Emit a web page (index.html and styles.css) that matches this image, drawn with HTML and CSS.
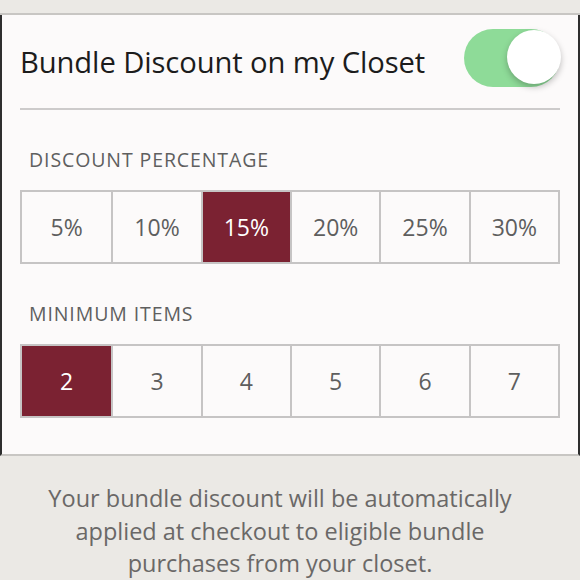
FILE: index.html
```html
<!DOCTYPE html>
<html lang="en">
<head>
    <meta charset="UTF-8">
    <meta name="viewport" content="width=device-width, initial-scale=1.0">
    <title>Bundle Discount</title>
    <link rel="stylesheet" href="styles.css">
</head>
<body>
    <div class="top-band"></div>

    <div class="card">
        <div class="setting-row">
            <span class="setting-title">Bundle Discount on my Closet</span>
            <div class="switch on">
                <div class="knob"></div>
            </div>
        </div>

        <div class="section">
            <div class="section-label">DISCOUNT PERCENTAGE</div>
            <div class="options">
                <div class="option">5%</div>
                <div class="option">10%</div>
                <div class="option selected">15%</div>
                <div class="option">20%</div>
                <div class="option">25%</div>
                <div class="option">30%</div>
            </div>
        </div>

        <div class="section">
            <div class="section-label">MINIMUM ITEMS</div>
            <div class="options">
                <div class="option selected">2</div>
                <div class="option">3</div>
                <div class="option">4</div>
                <div class="option">5</div>
                <div class="option">6</div>
                <div class="option">7</div>
            </div>
        </div>
    </div>

    <p class="note">Your bundle discount will be automatically applied at checkout to eligible bundle purchases from your closet.</p>
</body>
</html>
```

FILE: styles.css
```css
* {
    margin: 0;
    padding: 0;
    box-sizing: border-box;
    font-family: 'Open Sans', Lato, sans-serif;
}

body {
    background: #ebe9e5;
    width: 580px;
    height: 580px;
    overflow: hidden;
}

.top-band {
    height: 15px;
    border-bottom: 2px solid #c8c6c3;
}

.card {
    background: #fcfafa;
    border-left: 2px solid #2e2e2e;
    border-right: 2px solid #2e2e2e;
    border-bottom: 2px solid #c8c6c3;
    padding: 0 18px 36px;
}

.setting-row {
    display: flex;
    align-items: center;
    justify-content: space-between;
    height: 95px;
    border-bottom: 2px solid #cdcbcb;
}

.setting-title {
    font-size: 29.2px;
    color: #1c1c1c;
    letter-spacing: -0.1px;
}

.switch {
    width: 96px;
    height: 58px;
    border-radius: 29px;
    background: #8edb98;
    position: relative;
    margin-bottom: 8px;
}

.switch .knob {
    position: absolute;
    right: -1px;
    top: 1px;
    width: 54px;
    height: 54px;
    border-radius: 50%;
    background: #fff;
    box-shadow: 0 3px 6px rgba(0, 0, 0, 0.25);
}

.section-label {
    font-size: 19.5px;
    line-height: 24px;
    color: #5f5f5f;
    letter-spacing: 0.9px;
    padding: 38px 0 18px 9px;
}

.options {
    display: grid;
    grid-template-columns: repeat(6, 1fr);
    border: 2px solid #c6c4c4;
    height: 74px;
}

.option {
    display: flex;
    align-items: center;
    justify-content: center;
    font-size: 23px;
    color: #5e5e5e;
    border-left: 2px solid #c6c4c4;
}

.option:first-child {
    border-left: none;
}

.option.selected {
    background: #7b2232;
    color: #fff;
}

.note {
    padding: 26px 50px 0 30px;
    text-align: center;
    font-size: 23.5px;
    line-height: 32.5px;
    color: #6a6867;
}
```
